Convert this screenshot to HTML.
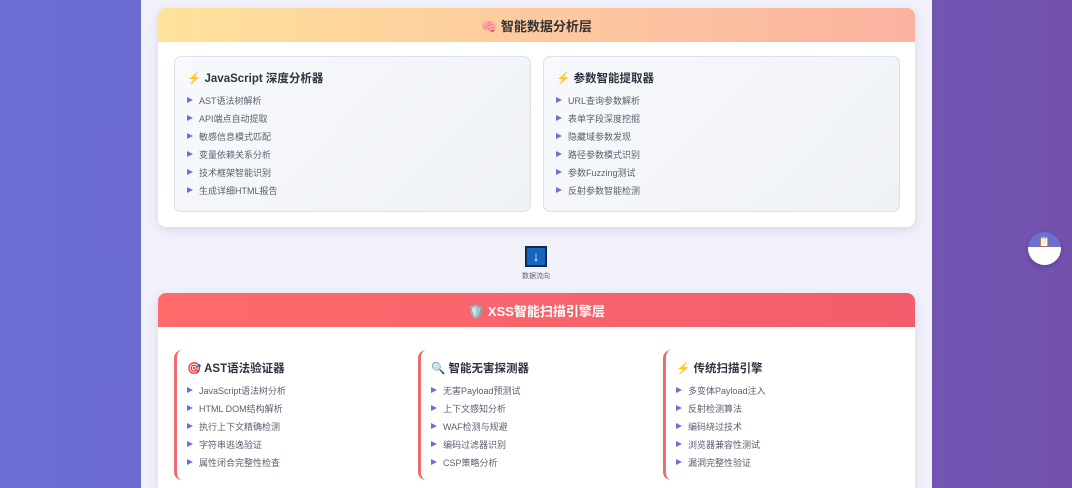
<!DOCTYPE html>
<html style="height:488px;overflow:hidden"><head><meta charset="utf-8"><style>
*{margin:0;padding:0;box-sizing:border-box}
body{width:1072px;height:488px;overflow:hidden;background:linear-gradient(90deg,#6b6fd6 0%,#6d5fc4 50%,#7352ae 100%);font-family:"Liberation Sans","Noto Sans CJK SC",sans-serif;position:relative}
.main{position:absolute;left:141px;top:0;width:791px;height:488px;background:#f1f1fa;overflow:hidden}
.card{position:absolute;left:17px;width:757px;background:#fff;border-radius:8px;box-shadow:0 3px 10px rgba(80,80,150,.15);overflow:hidden}
.hd{height:34px;display:flex;align-items:center;justify-content:center;font-weight:bold;font-size:13px;color:#333}
.box{position:absolute;top:48px;width:357px;height:156px;border:1px solid #dde2ea;border-radius:7px;background:linear-gradient(135deg,#f8f9fc,#eef1f6);padding:13px 12px}
h4{font-size:11.5px;color:#2d3340;margin:0 0 6px 0;display:flex;align-items:center;gap:5px}
ul{list-style:none}
li{font-size:9px;color:#5a6070;height:18px;line-height:18px;padding-left:12px;position:relative}
li:before{content:"";position:absolute;left:0;top:5px;border-left:6px solid #6a72d8;border-top:3.5px solid transparent;border-bottom:3.5px solid transparent}
.col{position:absolute;top:57px;width:230px;height:130px;border-left:3px solid #ef6b6f;border-radius:8px 0 0 8px;padding:10px 10px}
</style></head><body>
<div class="main">
 <div class="card" style="top:8px;height:219px">
  <div class="hd" style="background:linear-gradient(90deg,#ffe29b,#fdc79f 55%,#fbb2a0)">🧠&nbsp;智能数据分析层</div>
  <div class="box" style="left:16px">
   <h4>⚡ JavaScript 深度分析器</h4>
   <ul><li>AST语法树解析</li><li>API端点自动提取</li><li>敏感信息模式匹配</li><li>变量依赖关系分析</li><li>技术框架智能识别</li><li>生成详细HTML报告</li></ul>
  </div>
  <div class="box" style="left:385px">
   <h4>⚡ 参数智能提取器</h4>
   <ul><li>URL查询参数解析</li><li>表单字段深度挖掘</li><li>隐藏域参数发现</li><li>路径参数模式识别</li><li>参数Fuzzing测试</li><li>反射参数智能检测</li></ul>
  </div>
 </div>
 <div style="position:absolute;left:384px;top:246px;width:22px;height:21px;background:#1565c0;border:2px solid #0d2a50;color:#fff;font-size:13px;text-align:center;line-height:17px;font-weight:bold">↓</div>
 <div style="position:absolute;left:370px;top:271px;width:50px;text-align:center;font-size:7px;color:#666">数据流向</div>
 <div class="card" style="top:293px;height:200px">
  <div class="hd" style="background:linear-gradient(90deg,#ff6b6b,#f15d6c);color:#fff">🛡️&nbsp;XSS智能扫描引擎层</div>
  <div class="col" style="left:16px">
   <h4>🎯 AST语法验证器</h4>
   <ul><li>JavaScript语法树分析</li><li>HTML DOM结构解析</li><li>执行上下文精确检测</li><li>字符串逃逸验证</li><li>属性闭合完整性检查</li></ul>
  </div>
  <div class="col" style="left:260px">
   <h4>🔍 智能无害探测器</h4>
   <ul><li>无害Payload预测试</li><li>上下文感知分析</li><li>WAF检测与规避</li><li>编码过滤器识别</li><li>CSP策略分析</li></ul>
  </div>
  <div class="col" style="left:505px">
   <h4>⚡ 传统扫描引擎</h4>
   <ul><li>多变体Payload注入</li><li>反射检测算法</li><li>编码绕过技术</li><li>浏览器兼容性测试</li><li>漏洞完整性验证</li></ul>
  </div>
 </div>
</div>
<div style="position:absolute;left:1028px;top:232px;width:33px;height:33px;border-radius:50%;background:linear-gradient(180deg,#6a6fd0 0%,#6a6fd0 45%,#fff 46%);box-shadow:0 2px 6px rgba(0,0,0,.2);text-align:center;line-height:22px;font-size:10px">📋</div>
</body></html>
